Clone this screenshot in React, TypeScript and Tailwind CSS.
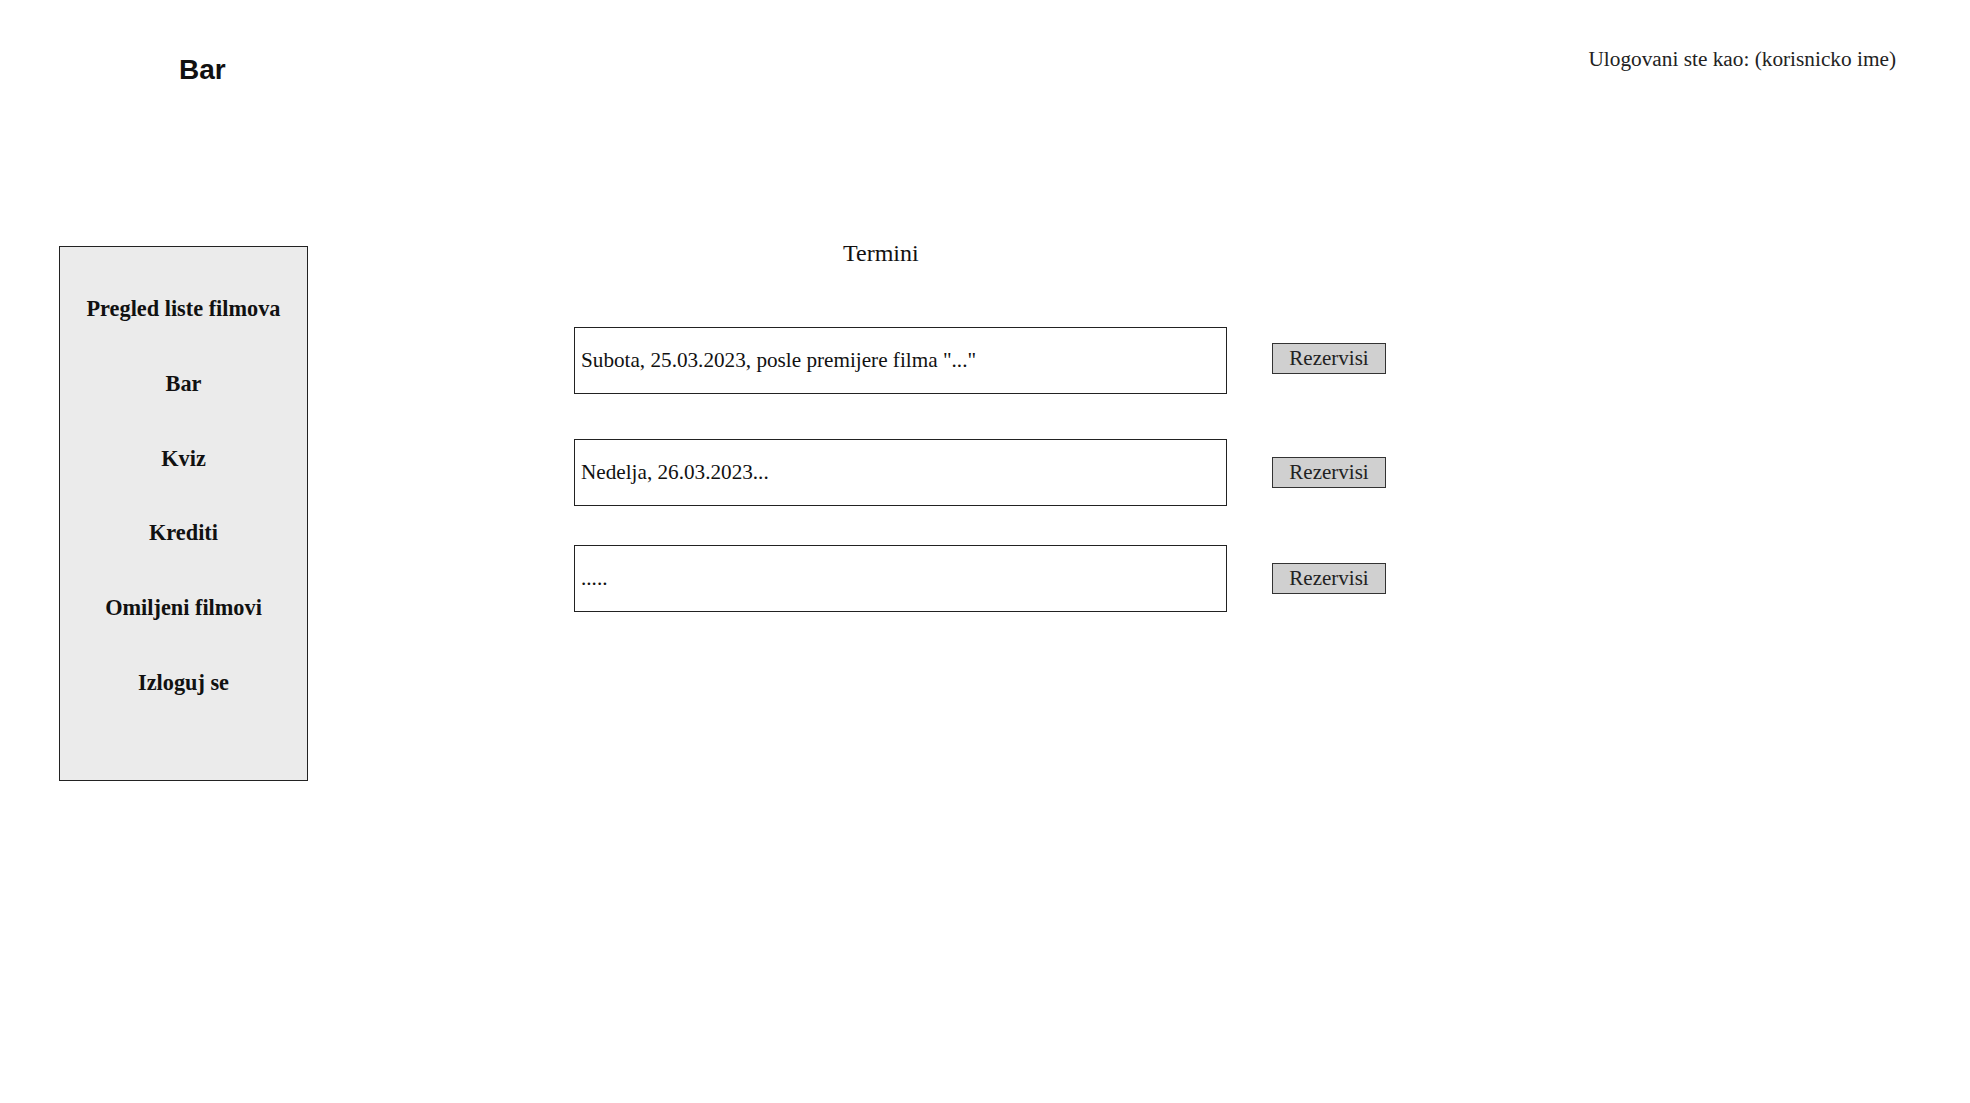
const menu = ['Pregled liste filmova', 'Bar', 'Kviz', 'Krediti', 'Omiljeni filmovi', 'Izloguj se'];

const termini = [
  { text: 'Subota, 25.03.2023, posle premijere filma "..."', mt: 'mt-[62px]', btn: 'mb-[5px]' },
  { text: 'Nedelja, 26.03.2023...', mt: 'mt-[45px]', btn: '' },
  { text: '.....', mt: 'mt-[39px]', btn: '' },
];

export default function App() {
  return (
    <div className="min-h-screen w-full bg-white text-[#111] font-['Liberation_Serif',serif]">
      <header className="flex items-start justify-between pl-[179px] pr-[74px]">
        <h1 className="mt-[56px] text-[28px] font-bold leading-none font-['Liberation_Sans',Arial,sans-serif]">
          Bar
        </h1>
        <div className="mt-[49px] text-[21.3px] leading-none text-[#222]">
          Ulogovani ste kao: (korisnicko ime)
        </div>
      </header>

      <div className="flex items-start">
        <nav className="ml-[59px] mt-[162px] flex h-[535px] w-[249px] flex-col items-center gap-[52.5px] border border-[#222] bg-[#ebebeb] pt-[51px]">
          {menu.map((item) => (
            <div key={item} className="text-[22.3px] font-bold leading-none">
              {item}
            </div>
          ))}
        </nav>

        <main className="ml-[266px] mt-[157px] flex flex-col">
          <h2 className="ml-[269px] text-[24px] leading-none">Termini</h2>
          {termini.map(({ text, mt, btn }) => (
            <div key={text} className={`flex items-center gap-[45px] ${mt}`}>
              <div className="flex h-[67px] w-[653px] items-center border border-[#222] px-[6px] text-[21.2px] leading-none">
                {text}
              </div>
              <button
                className={`flex h-[31px] w-[114px] items-center justify-center border border-[#333] bg-[#d0d0d0] text-[21px] leading-none text-[#222] ${btn}`}
              >
                Rezervisi
              </button>
            </div>
          ))}
        </main>
      </div>
    </div>
  );
}
